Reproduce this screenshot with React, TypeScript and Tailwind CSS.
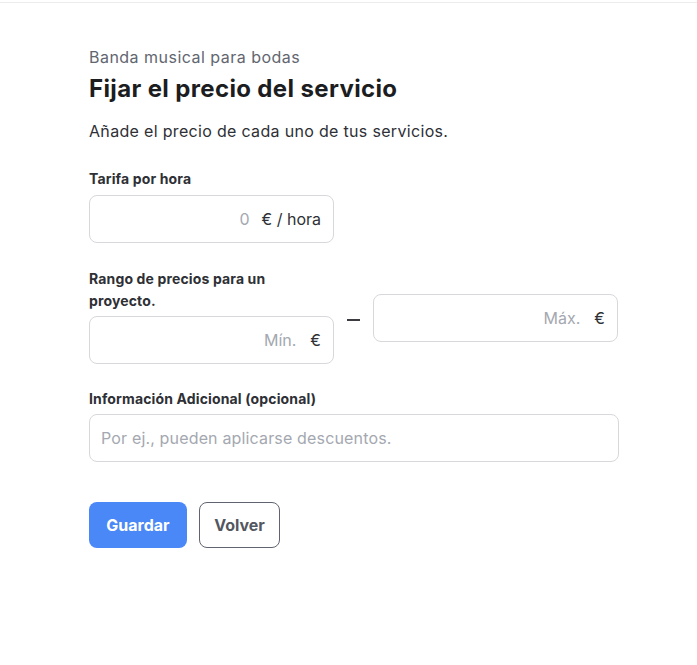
export default function App() {
  return (
    <div className="min-h-screen bg-white" style={{ fontFamily: "Inter, 'Noto Sans', sans-serif" }}>
      <div className="h-[3px] border-b border-[#ededed]" />
      <div className="pl-[89px] pt-[42px] w-[619px] box-content">
        <p className="text-[16px] leading-[24px] tracking-[0.03em] text-[#62666f]">Banda musical para bodas</p>
        <h1 className="mt-[4px] text-[24px] leading-[32px] font-bold tracking-[0.015em] text-[#1c1d21]">Fijar el precio del servicio</h1>
        <p className="mt-[14px] text-[16px] leading-[24px] tracking-[0.02em] text-[#2e3035]">Añade el precio de cada uno de tus servicios.</p>

        <label className="block mt-[25px] text-[14px] leading-[22px] font-bold tracking-[0.01em] text-[#2e3035]">Tarifa por hora</label>
        <div className="mt-[5px] w-[245px] h-[48px] rounded-[8px] border border-[#d6d8dc] flex items-center justify-end px-[12px] gap-[12px] text-[16px]">
          <span className="text-[#a4a8b0]">0</span>
          <span className="text-[#2e3035]">€ / hora</span>
        </div>

        <div className="mt-[25px] flex items-center gap-[13px]">
          <div className="w-[245px]">
            <label className="block w-[220px] text-[14px] leading-[22px] font-bold tracking-[0.01em] text-[#2e3035]">
              Rango de precios para un proyecto.
            </label>
            <div className="mt-[4px] h-[48px] rounded-[8px] border border-[#d6d8dc] flex items-center justify-end px-[12px] gap-[14px] text-[16px]">
              <span className="text-[#a4a8b0]">Mín.</span>
              <span className="text-[#2e3035]">€</span>
            </div>
          </div>
          <span className="block mt-[8px] w-[13px] h-[1.5px] bg-[#3a3c42]" />
          <div className="w-[245px] self-start">
            <div className="h-[22px]" />
            <div className="mt-[4px] h-[48px] rounded-[8px] border border-[#d6d8dc] flex items-center justify-end px-[12px] gap-[14px] text-[16px]">
              <span className="text-[#a4a8b0]">Máx.</span>
              <span className="text-[#2e3035]">€</span>
            </div>
          </div>
        </div>

        <label className="block mt-[24px] text-[14px] leading-[22px] font-bold tracking-[0.01em] text-[#2e3035]">Información Adicional (opcional)</label>
        <div className="mt-[4px] w-[530px] h-[48px] rounded-[8px] border border-[#d6d8dc] flex items-center px-[11px] text-[16px] tracking-[0.01em] text-[#a4a8b0]">
          Por ej., pueden aplicarse descuentos.
        </div>

        <div className="mt-[40px] flex gap-[12px]">
          <button className="w-[98px] h-[46px] rounded-[8px] bg-[#4a87f7] text-white text-[16px] font-bold">Guardar</button>
          <button className="w-[81px] h-[46px] rounded-[8px] border border-[#5f6470] text-[#53575f] text-[16px] font-bold">Volver</button>
        </div>
      </div>
    </div>
  );
}
